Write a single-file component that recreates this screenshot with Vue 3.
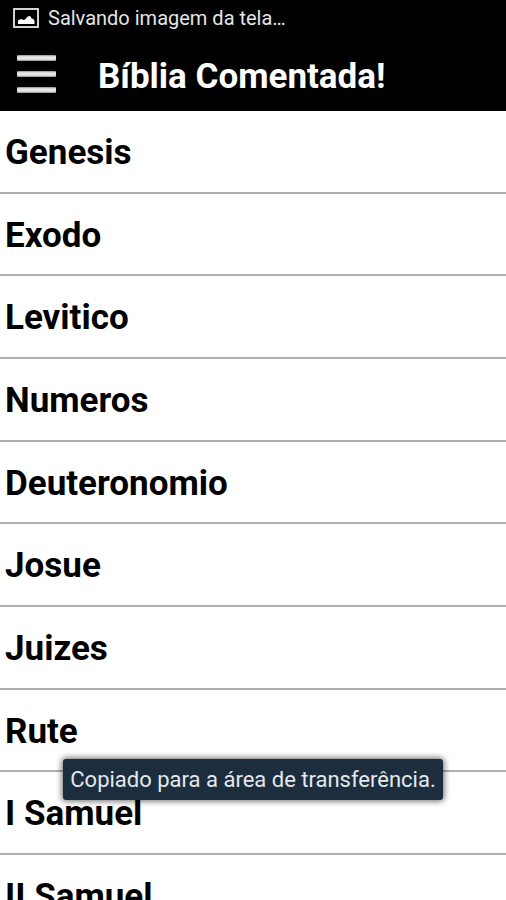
<template>
  <div class="screen">
    <div class="status-bar">
      <svg class="status-icon" viewBox="0 0 26 20" aria-hidden="true">
        <rect x="1" y="1" width="24" height="18" fill="none" stroke="#e8e8e8" stroke-width="1.8" />
        <path d="M5 16v-3.5l3-1.5 2.5 1 1.5-.5 3-3.2h2.4l1.6 2.7 1.2-.5L21.500 13v3z" fill="#fff" />
      </svg>
      <span>Salvando imagem da tela…</span>
    </div>

    <header class="app-bar">
      <button class="menu-btn" aria-label="Menu" @click="menuOpen = !menuOpen">
        <span class="menu-line"></span>
        <span class="menu-line"></span>
        <span class="menu-line"></span>
      </button>
      <h1 class="title">Bíblia Comentada!</h1>
    </header>

    <ul class="books">
      <li v-for="book in books" :key="book" class="book">
        <button class="book-btn" @click="current = book">{{ book }}</button>
      </li>
    </ul>

    <div class="toast-layer">
      <div class="toast" role="status">Copiado para a área de transferência.</div>
    </div>
  </div>
</template>

<script setup>
import { ref } from 'vue'

const books = [
  'Genesis',
  'Exodo',
  'Levitico',
  'Numeros',
  'Deuteronomio',
  'Josue',
  'Juizes',
  'Rute',
  'I Samuel',
  'II Samuel',
]

const menuOpen = ref(false)
const current = ref('')
</script>

<style>
body {
  background: #fff;
}
</style>

<style scoped>
.screen {
  position: relative;
  display: flex;
  flex-direction: column;
  height: 100vh;
  overflow: hidden;
  font-family: Roboto, 'Liberation Sans', sans-serif;
  background: #fff;
}
.status-bar {
  display: flex;
  flex: none;
  align-items: center;
  gap: 9px;
  height: 36px;
  padding-left: 13px;
  font-size: 20px;
  color: #e4e4e4;
  background: #000;
}
.status-icon {
  width: 26px;
  height: 20px;
}
.app-bar {
  display: flex;
  flex: none;
  align-items: center;
  gap: 42px;
  height: 75px;
  padding-left: 17px;
  color: #fff;
  background: #000;
}
.menu-btn {
  display: flex;
  flex-direction: column;
  gap: 10px;
  width: 39px;
  padding: 0;
  border: 0;
  background: none;
  cursor: pointer;
}
.menu-line {
  height: 6px;
  border-radius: 1px;
  background: linear-gradient(#8c8c8c, #e6e6e6 30%, #e6e6e6 70%, #8c8c8c);
}
.title {
  margin: 0;
  padding-top: 6px;
  font-size: 35px;
  line-height: 42px;
  font-weight: 700;
}
.books {
  flex: 1;
  margin: 0;
  padding: 0;
  overflow-y: auto;
  scrollbar-width: none;
  list-style: none;
}
.book {
  height: 83px;
  box-sizing: border-box;
  border-bottom: 2px solid #b0b0b0;
}
.book:nth-child(3n + 2) {
  height: 82px;
}
.book-btn {
  width: 100%;
  height: 100%;
  padding: 3px 5px 0;
  border: 0;
  font: 700 35px/42px Roboto, 'Liberation Sans', sans-serif;
  text-align: left;
  color: #000;
  background: none;
  cursor: pointer;
}
.toast-layer {
  position: absolute;
  right: 0;
  bottom: 100px;
  left: 0;
  display: flex;
  justify-content: center;
  pointer-events: none;
}
.toast {
  padding: 1px 7px 0;
  border-radius: 3px;
  font-size: 22px;
  line-height: 40px;
  color: #e4e8ec;
  background: #1c2e3e;
  box-shadow: 0 0 6px 1px rgba(0, 0, 0, 0.6);
}
</style>
